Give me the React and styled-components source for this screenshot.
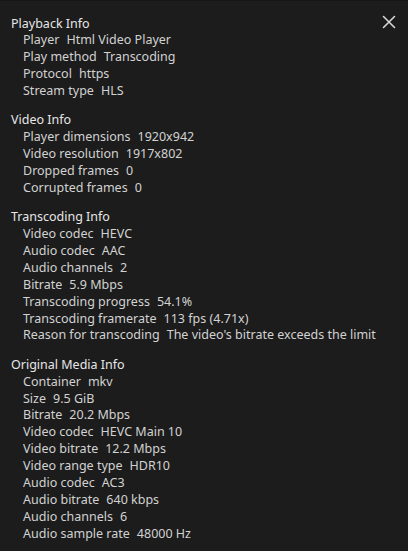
import React from "react";
import styled, { createGlobalStyle } from "styled-components";

const Global = createGlobalStyle`
  html, body { margin: 0; padding: 0; background: #1c1c1c; }
  body { font-family: "Noto Sans", sans-serif; }
`;

const Panel = styled.div`
  position: relative;
  box-sizing: border-box;
  width: 408px;
  min-height: 551px;
  background: #1c1c1c;
  border-top: 1px solid #161616;
  padding: 14.5px 11px 12px 11px;
  font-family: "Noto Sans", sans-serif;
  font-size: 12.5px;
  line-height: 1.35;
  display: flex;
  flex-direction: column;
  gap: 1em;
`;

const CloseButton = styled.button`
  position: absolute;
  top: 9px;
  right: 7px;
  width: 24px;
  height: 24px;
  padding: 0;
  border: none;
  background: transparent;
  color: #d6d6d6;
  display: flex;
  align-items: center;
  justify-content: center;
  cursor: pointer;
`;

const Section = styled.section`
  display: flex;
  flex-direction: column;
`;

const Heading = styled.div`
  color: #e6e6e6;
`;

const Row = styled.div`
  padding-left: 12px;
  color: #d2d2d2;
  white-space: nowrap;
`;

const Value = styled.span`
  margin-left: 7px;
`;

const data = [
  {
    title: "Playback Info",
    rows: [
      ["Player", "Html Video Player"],
      ["Play method", "Transcoding"],
      ["Protocol", "https"],
      ["Stream type", "HLS"],
    ],
  },
  {
    title: "Video Info",
    rows: [
      ["Player dimensions", "1920x942"],
      ["Video resolution", "1917x802"],
      ["Dropped frames", "0"],
      ["Corrupted frames", "0"],
    ],
  },
  {
    title: "Transcoding Info",
    rows: [
      ["Video codec", "HEVC"],
      ["Audio codec", "AAC"],
      ["Audio channels", "2"],
      ["Bitrate", "5.9 Mbps"],
      ["Transcoding progress", "54.1%"],
      ["Transcoding framerate", "113 fps (4.71x)"],
      ["Reason for transcoding", "The video's bitrate exceeds the limit"],
    ],
  },
  {
    title: "Original Media Info",
    rows: [
      ["Container", "mkv"],
      ["Size", "9.5 GiB"],
      ["Bitrate", "20.2 Mbps"],
      ["Video codec", "HEVC Main 10"],
      ["Video bitrate", "12.2 Mbps"],
      ["Video range type", "HDR10"],
      ["Audio codec", "AC3"],
      ["Audio bitrate", "640 kbps"],
      ["Audio channels", "6"],
      ["Audio sample rate", "48000 Hz"],
    ],
  },
];

export default function App() {
  return (
    <>
      <Global />
      <Panel>
        <CloseButton aria-label="Close">
          <svg width="14" height="14" viewBox="0 0 14 14">
            <path d="M1.5 1.5 L12.5 12.5 M12.5 1.5 L1.5 12.5" stroke="currentColor" strokeWidth="1.6" strokeLinecap="round" />
          </svg>
        </CloseButton>
        {data.map((s) => (
          <Section key={s.title}>
            <Heading>{s.title}</Heading>
            {s.rows.map(([l, v]) => (
              <Row key={l}>
                {l}
                <Value>{v}</Value>
              </Row>
            ))}
          </Section>
        ))}
      </Panel>
    </>
  );
}
